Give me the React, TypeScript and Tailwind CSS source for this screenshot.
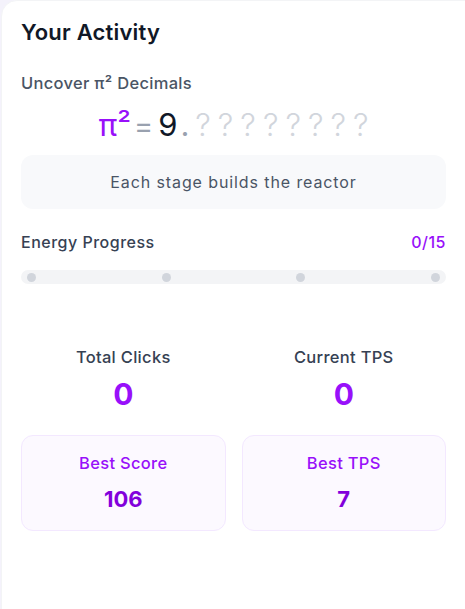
export default function App() {
  const dots = [0, 1, 2, 3];
  return (
    <div className="h-[609px] w-[465px] overflow-hidden bg-[#f4f2fb]" style={{ fontFamily: "Inter, 'Noto Sans', sans-serif" }}>
      <div className="ml-px h-[640px] w-[480px] rounded-2xl border border-gray-100 bg-white pl-[19px] pr-[34px] pt-[17px]">
        <h2 className="text-[22px] font-semibold leading-7 tracking-[0.2px] text-[#111827]">Your Activity</h2>

        <p className="mt-[27px] text-[16.5px] font-medium leading-5 tracking-[0.3px] text-gray-600">Uncover π² Decimals</p>

        <div className="mt-[12px] flex h-[40px] items-baseline justify-center pl-[7px] text-[31px] leading-10">
          <span className="text-purple-600">π²</span>
          <span className="ml-[3px] mr-[5px] text-[29px] text-gray-400">=</span>
          <span className="text-[#111827]">9</span>
          <span className="ml-[3px] text-gray-400">.</span>
          <span className="ml-[6px] font-light tracking-[7px] text-gray-300">????????</span>
        </div>

        <div className="mt-[10px] flex h-[54px] items-center justify-center rounded-xl bg-[#f8f9fb] text-[16px] tracking-[0.9px] text-gray-600">
          Each stage builds the reactor
        </div>

        <div className="mt-[23px] flex h-5 items-center justify-between text-[16px] font-medium leading-5 tracking-[0.5px]">
          <span className="text-gray-700">Energy Progress</span>
          <span className="text-purple-600">0/15</span>
        </div>

        <div className="mt-[18px] flex h-[14px] items-center justify-between rounded-full bg-gray-100 px-[6px]">
          {dots.map((d) => (
            <span key={d} className="h-[9px] w-[9px] rounded-full bg-gray-300" />
          ))}
        </div>

        <div className="mt-[63px] grid grid-cols-2 gap-4">
          <div className="flex flex-col items-center">
            <span className="h-5 text-[16.5px] font-medium leading-5 tracking-[0.3px] text-gray-700">Total Clicks</span>
            <span className="mt-[9px] h-9 text-[30px] font-bold leading-9 text-purple-600">0</span>
          </div>
          <div className="flex flex-col items-center">
            <span className="h-5 text-[16.5px] font-medium leading-5 tracking-[0.3px] text-gray-700">Current TPS</span>
            <span className="mt-[9px] h-9 text-[30px] font-bold leading-9 text-purple-600">0</span>
          </div>
        </div>

        <div className="mt-[23px] grid grid-cols-2 gap-4">
          <div className="flex h-[96px] flex-col items-center justify-center rounded-xl border border-purple-100 bg-purple-50/60">
            <span className="text-[16.5px] font-medium leading-5 tracking-[0.3px] text-purple-600">Best Score</span>
            <span className="mt-[12px] text-[22px] font-bold leading-7 text-purple-700">106</span>
          </div>
          <div className="flex h-[96px] flex-col items-center justify-center rounded-xl border border-purple-100 bg-purple-50/60">
            <span className="text-[16.5px] font-medium leading-5 tracking-[0.3px] text-purple-600">Best TPS</span>
            <span className="mt-[12px] text-[22px] font-bold leading-7 text-purple-700">7</span>
          </div>
        </div>
      </div>
    </div>
  );
}
